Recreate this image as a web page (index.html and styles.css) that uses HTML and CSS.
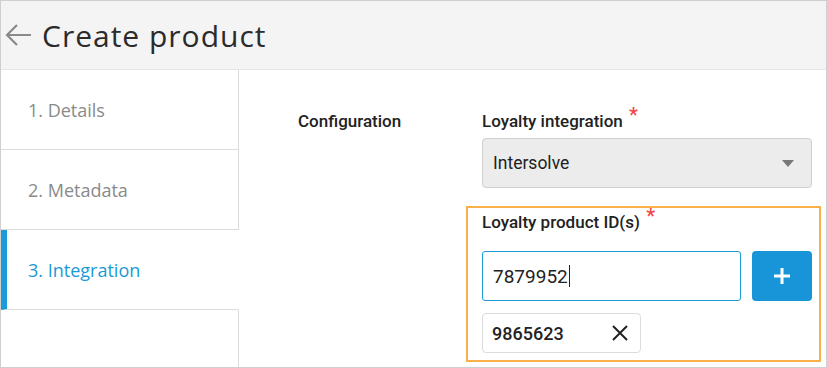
FILE: index.html
```html
<!DOCTYPE html>
<html lang="en">
<head>
  <meta charset="UTF-8" />
  <meta name="viewport" content="width=device-width, initial-scale=1.0"/>
  <title>Create product</title>
  <link rel="stylesheet" href="styles.css">
</head>
<body>
  <div class="frame">
    <header class="page-header">
      <svg class="back-icon" width="28" height="24" viewBox="0 0 28 24">
        <path d="M27 12 H3 M13 2 L3 12 L13 22" fill="none" stroke="#8a8a8a" stroke-width="2.2"/>
      </svg>
      <h1>Create product</h1>
    </header>

    <div class="main">
      <nav class="steps">
        <div class="step">1. Details</div>
        <div class="step">2. Metadata</div>
        <div class="step active">3. Integration</div>
        <div class="step-rest"></div>
      </nav>

      <section class="content">
        <div class="section-title">Configuration</div>
        <div class="fields">
          <div class="field">
            <label class="field-label">Loyalty integration <span class="req">*</span></label>
            <div class="select">
              <span>Intersolve</span>
              <span class="caret"></span>
            </div>
          </div>

          <div class="field highlight">
            <label class="field-label">Loyalty product ID(s) <span class="req">*</span></label>
            <div class="add-row">
              <div class="text-input">7879952<span class="cursor"></span></div>
              <button class="add-btn" type="button">
                <svg width="18" height="18" viewBox="0 0 18 18">
                  <path d="M9 1 V17 M1 9 H17" stroke="#fff" stroke-width="3"/>
                </svg>
              </button>
            </div>
            <div class="chips">
              <div class="chip">
                <span>9865623</span>
                <svg width="18" height="18" viewBox="0 0 18 18">
                  <path d="M2 2 L16 16 M16 2 L2 16" stroke="#222" stroke-width="2"/>
                </svg>
              </div>
            </div>
          </div>
        </div>
      </section>
    </div>
  </div>
</body>
</html>
```

FILE: styles.css
```css
* {
  box-sizing: border-box;
}

body {
  margin: 0;
  background: #fff;
  font-family: Roboto, "Liberation Sans", sans-serif;
}

.frame {
  width: 827px;
  height: 368px;
  border: 1px solid #cfcfcf;
  display: flex;
  flex-direction: column;
  overflow: hidden;
}

.page-header {
  height: 69px;
  flex: none;
  background: #f4f4f4;
  border-bottom: 1px solid #e6e6e6;
  display: flex;
  align-items: center;
  padding-left: 3px;
}

.back-icon {
  margin-right: 10px;
}

.page-header h1 {
  margin: 0;
  font-family: "Open Sans", sans-serif;
  font-weight: 400;
  font-size: 30px;
  color: #2b2b2b;
  letter-spacing: 1px;
}

.main {
  flex: 1;
  display: flex;
}

.steps {
  width: 238px;
  display: flex;
  flex-direction: column;
}

.step {
  height: 80px;
  display: flex;
  align-items: center;
  padding-left: 27px;
  border-bottom: 1px solid #dcdcdc;
  border-right: 1px solid #dcdcdc;
  font-family: "Open Sans", sans-serif;
  font-size: 18px;
  color: #8a8a8a;
}

.step.active {
  color: #1a9ad6;
  border-right-color: transparent;
  border-left: 6px solid #1a9ad6;
  padding-left: 21px;
}

.step-rest {
  flex: 1;
  border-right: 1px solid #dcdcdc;
}

.content {
  flex: 1;
  display: flex;
  padding: 41px 0 0 59px;
}

.section-title {
  width: 184px;
  font-size: 17px;
  font-weight: 500;
  line-height: 20px;
  color: #222;
}

.fields {
  width: 330px;
}

.field-label {
  display: block;
  font-size: 17px;
  font-weight: 500;
  line-height: 20px;
  color: #222;
}

.req {
  color: #f04848;
  font-size: 20px;
  line-height: 0;
  position: relative;
  top: -5px;
  margin-left: 2px;
}

.select {
  margin-top: 7px;
  height: 50px;
  background: #ececec;
  border: 1px solid #d0d0d0;
  border-radius: 4px;
  display: flex;
  align-items: center;
  justify-content: space-between;
  padding: 0 17px 0 10px;
  font-size: 17.5px;
  color: #222;
}

.caret {
  width: 0;
  height: 0;
  border-left: 6.5px solid transparent;
  border-right: 6.5px solid transparent;
  border-top: 7px solid #777;
}

.highlight {
  margin: 18px -9px 0 -16px;
  padding: 4px 7px 7px 14px;
  border: 2px solid #f7b04a;
}

.add-row {
  margin-top: 19px;
  display: flex;
  gap: 11px;
}

.text-input {
  width: 260px;
  height: 50px;
  border: 1px solid #1a9ad6;
  border-radius: 3px;
  display: flex;
  align-items: center;
  padding-left: 10px;
  font-size: 19px;
  color: #222;
}

.cursor {
  display: inline-block;
  width: 1px;
  height: 22px;
  background: #222;
  margin-left: 1px;
}

.add-btn {
  width: 60px;
  height: 50px;
  border: none;
  border-radius: 4px;
  background: #1795d8;
  display: flex;
  align-items: center;
  justify-content: center;
  padding: 0;
}

.chips {
  margin-top: 12px;
  display: flex;
}

.chip {
  width: 159px;
  height: 40px;
  border: 1px solid #dcdcdc;
  border-radius: 4px;
  display: flex;
  align-items: center;
  justify-content: space-between;
  padding: 0 11px 0 9px;
  font-size: 18px;
  font-weight: 500;
  color: #222;
}
```
